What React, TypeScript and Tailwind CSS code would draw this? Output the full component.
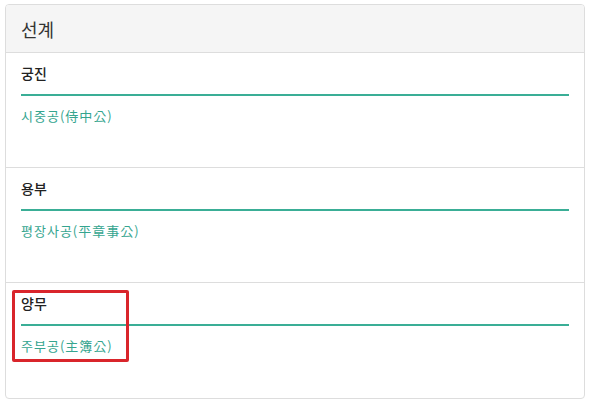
const sections = [
  { title: "궁진", link: "시중공(侍中公)" },
  { title: "용부", link: "평장사공(平章事公)" },
  { title: "양무", link: "주부공(主簿公)" },
];

export default function App() {
  return (
    <div
      className="relative w-[589px] h-[404px] bg-white pt-[4px] pl-[5px]"
      style={{ fontFamily: '"Noto Sans CJK KR", "Noto Sans", sans-serif' }}
    >
      <div className="w-[580px] h-[395px] border border-[#dddddd] rounded-[4px] overflow-hidden">
        <div className="h-[48px] bg-[#f5f5f5] border-b border-[#dddddd] flex items-center px-[15px]">
          <h2 className="text-[18px] text-[#333333] leading-none">선계</h2>
        </div>
        {sections.map((s, i) => (
          <div
            key={s.title}
            className={`h-[115px] px-[15px] pt-[10px] ${i < 2 ? "border-b border-[#dddddd]" : ""}`}
          >
            <div className="text-[14px] leading-[20px] font-medium text-[#222222]">{s.title}</div>
            <div className="mt-[11px] h-[2px] bg-[#3aae96] w-[548px]" />
            <div className="mt-[11px] text-[13px] leading-[18px] tracking-[1px] text-[#35a58f]">{s.link}</div>
          </div>
        ))}
      </div>
      {/* annotation box */}
      <div className="absolute left-[12px] top-[290px] w-[117px] h-[72px] border-[3px] border-[#d9252b] rounded-[2px]" />
    </div>
  );
}
